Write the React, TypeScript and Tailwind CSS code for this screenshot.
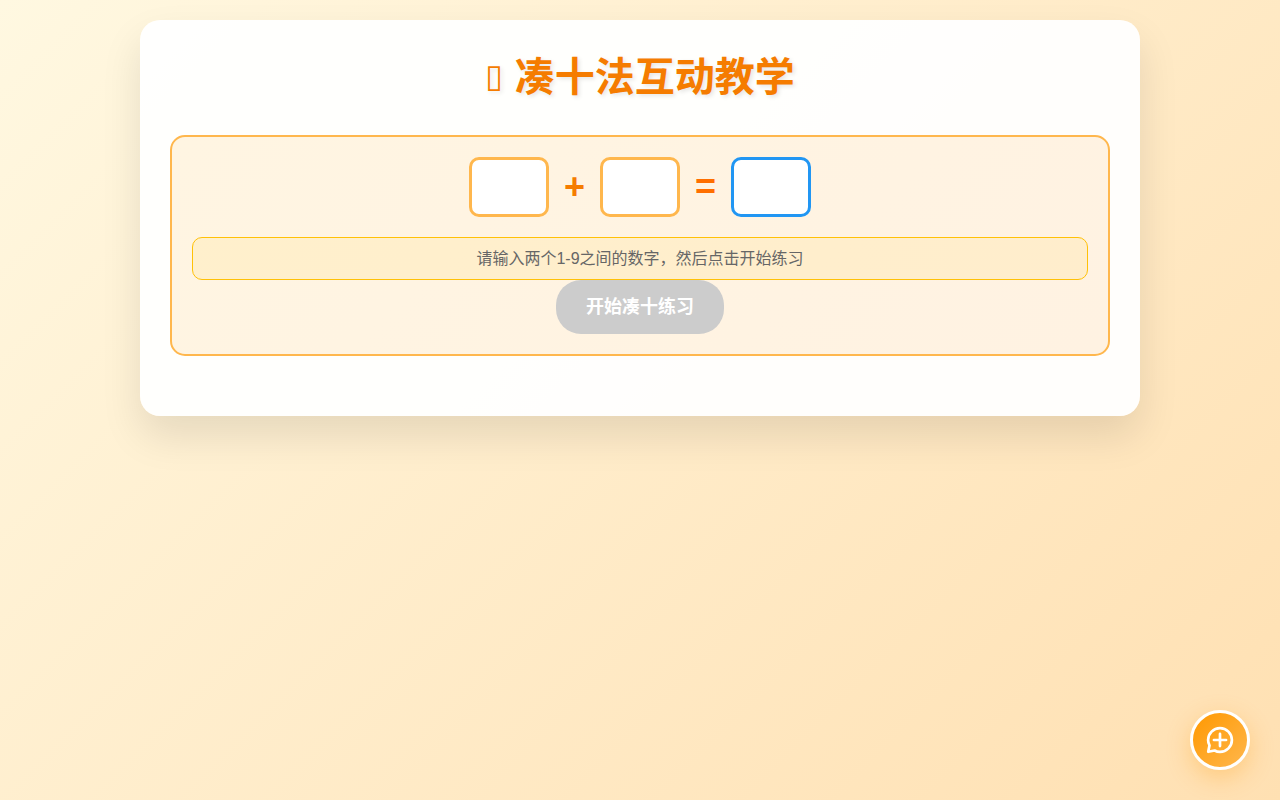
import { useState } from "react";

const boxClass =
  "h-[60px] w-20 rounded-[10px] border-3 bg-white text-center text-2xl font-bold outline-none";

function isDigit(value: string) {
  return /^[1-9]$/.test(value);
}

export default function App() {
  const [first, setFirst] = useState("");
  const [second, setSecond] = useState("");
  const [started, setStarted] = useState(false);

  const ready = isDigit(first) && isDigit(second);
  const sum = started && ready ? String(Number(first) + Number(second)) : "";

  return (
    <div className="min-h-screen bg-linear-[135deg] from-[#fff8e1] to-[#ffe0b2] p-5 font-['Liberation_Sans','Noto_Sans_CJK_SC',sans-serif] text-[#333333]">
      <main className="mx-auto max-w-[1000px] rounded-[20px] bg-white/95 px-[30px] pt-[30px] pb-[60px] shadow-[0_20px_40px_rgba(0,0,0,0.1)]">
        <h1 className="mb-[30px] flex items-center justify-center gap-3 text-[40px] leading-[55px] font-bold text-[#f57c00] [text-shadow:2px_2px_4px_rgba(0,0,0,0.1)]">
          <span className="pb-1 font-['DejaVu_Sans',sans-serif] text-[32px] leading-none font-normal">▯</span>
          <span>凑十法互动教学</span>
        </h1>

        <section className="rounded-[15px] border-2 border-[#ffb74d] bg-linear-[135deg] from-[#fff5e2] to-[#fff2e2] p-5 text-center">
          <div className="mb-5 flex items-center justify-center gap-[15px]">
            <input
              type="text"
              inputMode="numeric"
              maxLength={1}
              aria-label="第一个数字"
              value={first}
              onChange={(e) => setFirst(e.target.value)}
              className={`${boxClass} border-[#ffb74d] text-[#f57c00]`}
            />
            <span className="text-4xl font-bold text-[#f57c00]">+</span>
            <input
              type="text"
              inputMode="numeric"
              maxLength={1}
              aria-label="第二个数字"
              value={second}
              onChange={(e) => setSecond(e.target.value)}
              className={`${boxClass} border-[#ffb74d] text-[#f57c00]`}
            />
            <span className="text-4xl font-bold text-[#ff6f00]">=</span>
            <input
              type="text"
              readOnly
              aria-label="结果"
              value={sum}
              className={`${boxClass} border-[#2196f3] text-[#2196f3]`}
            />
          </div>

          <p className="rounded-[10px] border border-[#ffc107] bg-[#ffc107]/10 p-2.5 text-base leading-[21px] text-[#666666]">
            请输入两个1-9之间的数字，然后点击开始练习
          </p>

          <button
            type="button"
            disabled={!ready}
            onClick={() => setStarted(true)}
            className="rounded-[25px] bg-[#ff9800] px-[30px] py-[15px] text-lg leading-6 font-bold text-white disabled:cursor-not-allowed disabled:bg-[#cccccc]"
          >
            开始凑十练习
          </button>
        </section>
      </main>

      <button
        type="button"
        aria-label="反馈"
        className="fixed right-[30px] bottom-[30px] flex size-[60px] items-center justify-center rounded-full border-3 border-white bg-linear-[135deg] from-[#ff9800] to-[#ffb74d] text-white shadow-[0_8px_24px_rgba(255,152,0,0.3)]"
      >
        <svg width="28" height="28" viewBox="0 0 24 24" fill="none" stroke="currentColor" strokeWidth="2.3" strokeLinecap="round" strokeLinejoin="round">
          <path d="M12 22.2a10.2 10.2 0 1 0-10.2-10.2c0 1.7.4 3.2 1.2 4.6L1.9 22.1l5.5-1.1c1.4.8 2.9 1.2 4.6 1.2Z" />
          <path d="M12 6.8v10.4M6.8 12h10.4" />
        </svg>
      </button>
    </div>
  );
}
